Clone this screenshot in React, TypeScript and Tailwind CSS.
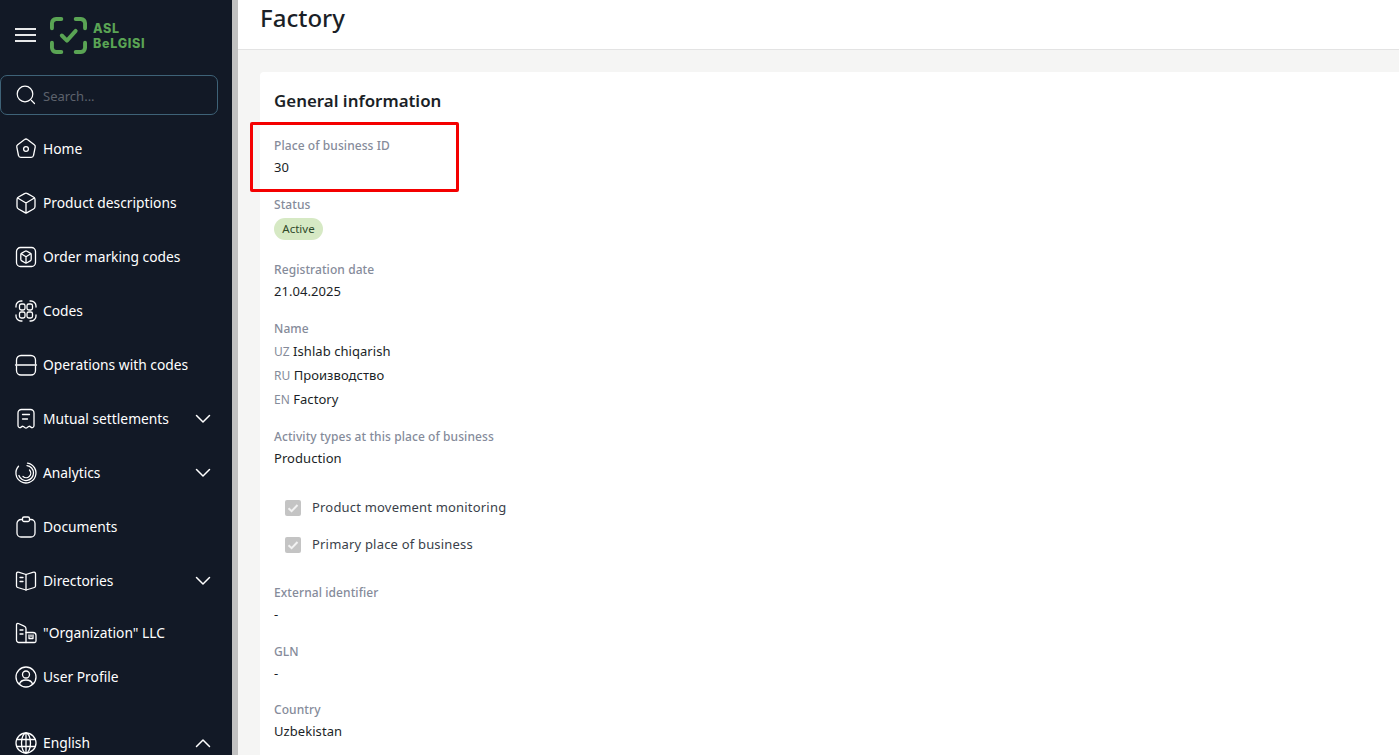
const sans = "font-['Noto_Sans','Open_Sans',sans-serif]";

const icons: Record<string, React.ReactNode> = {
  home: (
    <>
      <path d="M10.600 2.600a2.200 2.200 0 0 1 2.800 0l6.900 5.200c.8.600 1.100 1.500.9 2.400l-1.700 8.300c-.2 1.100-1.200 1.900-2.300 1.900H6.800c-1.100 0-2.100-.8-2.300-1.900l-1.700-8.300c-.2-.9.100-1.800.9-2.400z" />
      <circle cx="12" cy="12" r="2.400" />
    </>
  ),
  box: (
    <>
      <path d="M10.500 2.600a3 3 0 0 1 3 0l6 3.400a3 3 0 0 1 1.500 2.600v6.800a3 3 0 0 1-1.500 2.600l-6 3.400a3 3 0 0 1-3 0l-6-3.400A3 3 0 0 1 3 15.400V8.600A3 3 0 0 1 4.500 6z" />
      <path d="M3.600 7 12 12l8.400-5M12 12v10" />
    </>
  ),
  order: (
    <>
      <path d="M2.500 8V6.500a4 4 0 0 1 4-4h11a4 4 0 0 1 4 4V8M21.500 16v1.500a4 4 0 0 1-4 4h-11a4 4 0 0 1-4-4V16M2.500 8v8M21.500 8v8" />
      <path d="M11 6.300a2 2 0 0 1 2 0l3.200 1.800a2 2 0 0 1 1 1.700v4.400a2 2 0 0 1-1 1.700L13 17.700a2 2 0 0 1-2 0l-3.200-1.800a2 2 0 0 1-1-1.700V9.800a2 2 0 0 1 1-1.700z" />
      <path d="M7.200 8.800 12 11.800l4.800-3M12 11.800v6" />
    </>
  ),
  codes: (
    <>
      <path d="M2 8V7a5 5 0 0 1 5-5h1M16 2h1a5 5 0 0 1 5 5v1M22 16v1a5 5 0 0 1-5 5h-1M8 22H7a5 5 0 0 1-5-5v-1" />
      <rect x="5.500" y="5" width="5.500" height="6" rx="1.800" />
      <rect x="13" y="5" width="5.500" height="6" rx="1.800" />
      <rect x="5.500" y="13" width="5.500" height="6" rx="1.800" />
      <rect x="13" y="13" width="5.500" height="6" rx="1.800" />
    </>
  ),
  operations: (
    <>
      <path d="M2.500 11V7A4.500 4.500 0 0 1 7 2.500h10A4.500 4.500 0 0 1 21.500 7v4" />
      <path d="M1.500 12h21" />
      <path d="M2.500 13v4.500A4.500 4.500 0 0 0 7 22h10a4.500 4.500 0 0 0 4.500-4.500V13" />
    </>
  ),
  receipt: (
    <>
      <path d="M4 18.500V6a3.500 3.500 0 0 1 3.500-3.500h9A3.500 3.500 0 0 1 20 6v12.500c0 2-2 2.800-3.300 1.500-1-1-2.200-1-3 .2-.8 1.100-2.600 1.100-3.400 0-.8-1.200-2-1.200-3-.2C6 21.300 4 20.500 4 18.500z" />
      <path d="M8.500 7.500h7M8.500 12h5" />
    </>
  ),
  analytics: (
    <>
      <path d="M13.500 2.100A10 10 0 1 1 4.500 5.300" />
      <path d="M13 4.600A7.500 7.500 0 1 1 4.900 14.500" />
      <path d="M15.500 9A4.600 4.600 0 0 1 9 15.500" />
    </>
  ),
  documents: (
    <>
      <path d="M8.500 4.500H7A4 4 0 0 0 3 8.500V18a4 4 0 0 0 4 4h10a4 4 0 0 0 4-4V8.500a4 4 0 0 0-4-4h-1.500" />
      <rect x="8.500" y="2" width="7" height="4.500" rx="1.500" />
    </>
  ),
  book: (
    <>
      <path d="M12 5.500 4.500 3.200A1.500 1.500 0 0 0 2.500 4.600v12.500c0 .7.400 1.200 1.100 1.400L12 21l8.400-2.500c.7-.2 1.100-.7 1.100-1.400V4.600a1.500 1.500 0 0 0-2-1.400z" />
      <path d="M12 5.500V21M6 8.500h3M6 12.500h3" />
    </>
  ),
  org: (
    <>
      <path d="M12 21.500H5a2.500 2.500 0 0 1-2.500-2.500V3.800c0-1 1-1.700 1.900-1.300l5.800 2.600c1 .4 1.800 1.400 1.800 2.600z" />
      <path d="M6 9h3M6 13h3" />
      <path d="M12 21.500h8.500a1.500 1.500 0 0 0 1.500-1.500v-5.500a3 3 0 0 0-3-3h-7" />
      <path d="M15 14v3.500h4V14M17 14v1.500" />
    </>
  ),
  user: (
    <>
      <circle cx="12" cy="12" r="10" />
      <circle cx="12" cy="9.500" r="3.500" />
      <path d="M5.500 19c.8-2.800 3-4 6.500-4s5.700 1.200 6.500 4" />
    </>
  ),
  globe: (
    <>
      <circle cx="12" cy="12" r="10" />
      <ellipse cx="12" cy="12" rx="4.500" ry="10" />
      <path d="M2.800 8.500h18.400M2.800 15.500h18.400" />
      <path d="M12 2v20" />
    </>
  ),
};

function NavIcon({ name }: { name: string }) {
  return (
    <svg viewBox="0 0 24 24" fill="none" stroke="currentColor" strokeWidth="1.300" strokeLinecap="round" strokeLinejoin="round" className="w-[24px] h-[24px] shrink-0">
      {icons[name]}
    </svg>
  );
}

function Chevron({ up }: { up?: boolean }) {
  return (
    <svg viewBox="0 0 16 10" fill="none" stroke="currentColor" strokeWidth="1.500" strokeLinecap="round" strokeLinejoin="round" className="w-[16px] h-[10px] ml-auto mr-[21px]">
      <path d={up ? "M1.500 8.500 8 2l6.500 6.500" : "M1.500 1.500 8 8l6.500-6.500"} />
    </svg>
  );
}

function NavItem({ icon, label, chevron, up, className = "h-[54px]" }: { icon: string; label: string; chevron?: boolean; up?: boolean; className?: string }) {
  return (
    <div className={`flex items-center pl-[14px] text-white text-[13.800px] ${className}`}>
      <NavIcon name={icon} />
      <span className="ml-[5px]">{label}</span>
      {chevron && <Chevron up={up} />}
    </div>
  );
}

function Field({ label, children, className = "" }: { label: string; children: React.ReactNode; className?: string }) {
  return (
    <div className={className}>
      <div className="text-[12px] font-medium leading-[18px] tracking-[0.08px] text-[#858b9a]">{label}</div>
      {children}
    </div>
  );
}

function Value({ children }: { children: React.ReactNode }) {
  return <div className="text-[13px] leading-[24px] tracking-[0.06px] text-[#1b1f27]">{children}</div>;
}

function Lang({ code, children }: { code: string; children: React.ReactNode }) {
  return (
    <div className="h-[24px]">
      <span className="text-[12px] leading-none text-[#858b9a]">{code}</span> <span className="tracking-[0.06px]">{children}</span>
    </div>
  );
}

function Check({ label, className = "" }: { label: string; className?: string }) {
  return (
    <div className={`flex items-center h-[20px] pl-[11px] ${className}`}>
      <div className="w-[16px] h-[16px] rounded-[2px] bg-[#c4c4c4] flex items-center justify-center">
        <svg viewBox="0 0 16 16" fill="none" stroke="#f2f2f2" strokeWidth="2" className="w-[16px] h-[16px]">
          <path d="M3.500 8.200 6.600 11.200 12.500 5" />
        </svg>
      </div>
      <span className="ml-[11px] text-[13px] tracking-[0.19px] text-[#3a3f4a]">{label}</span>
    </div>
  );
}

export default function App() {
  return (
    <div className={`relative flex h-[755px] w-[1399px] overflow-hidden bg-[#f5f5f4] ${sans}`}>
      <aside className="w-[232px] shrink-0 bg-[#121926]">
        <div className="flex items-center h-[70px] pl-[15px]">
          <div className="w-[21px] flex flex-col gap-[4px]">
            <div className="h-[2px] bg-white/90" />
            <div className="h-[2px] bg-white/90" />
            <div className="h-[2px] bg-white/90" />
          </div>
          <svg viewBox="0 0 36 36" fill="none" stroke="#5aa454" strokeWidth="3.800" strokeLinecap="round" strokeLinejoin="round" className="w-[37px] h-[37px] ml-[14px]">
            <path d="M11 1.900H6A4.500 4.500 0 0 0 1.900 6v5M25 1.900h5A4.500 4.500 0 0 1 34.100 6v5M34.100 25v5a4.500 4.500 0 0 1-4.100 4.100h-5M11 34.100H6A4.500 4.500 0 0 1 1.900 30v-5" />
            <path d="M11.500 18 16.500 23 25 13.500" />
          </svg>
          <div className="ml-[6px] font-['Inter',sans-serif] font-extrabold text-[12.500px] leading-[15px] tracking-[0.7px] text-[#5aa454] mt-[2px]">
            <div>ASL</div>
            <div>BeLGISI</div>
          </div>
        </div>
        <div className="mt-[5px] w-[218px] h-[40px] rounded-[7px] border border-[#3e6277] flex items-center pl-[15px]">
          <svg viewBox="0 0 20 20" fill="none" stroke="white" strokeWidth="1.200" strokeLinecap="round" className="w-[20px] h-[20px]">
            <circle cx="9" cy="9" r="7.800" />
            <path d="M15.500 15.500 18.500 18.500" />
          </svg>
          <span className="ml-[7px] pt-[3px] text-[13px] text-[#5d626c]">Search...</span>
        </div>
        <div className="mt-[7px]">
          <NavItem icon="home" label="Home" />
          <NavItem icon="box" label="Product descriptions" />
          <NavItem icon="order" label="Order marking codes" />
          <NavItem icon="codes" label="Codes" />
          <NavItem icon="operations" label="Operations with codes" />
          <NavItem icon="receipt" label="Mutual settlements" chevron />
          <NavItem icon="analytics" label="Analytics" chevron />
          <NavItem icon="documents" label="Documents" />
          <NavItem icon="book" label="Directories" chevron />
          <NavItem icon="org" label={'"Organization" LLC'} className="h-[50px]" />
          <NavItem icon="user" label="User Profile" className="h-[38px]" />
          <NavItem icon="globe" label="English" chevron up className="h-[38px] mt-[28px]" />
        </div>
      </aside>
      <div className="w-[6px] shrink-0 bg-[#c1c1c1]" />
      <main className="flex-1 min-w-0">
        <header className="h-[50px] bg-white border-b border-[#e3e3e3] pl-[22px]">
          <h1 className="text-[24px] font-medium leading-[35px] text-[#1b1f27]">Factory</h1>
        </header>
        <section className="mt-[22px] ml-[22px] h-[700px] rounded-tl-[4px] bg-white pl-[14px] pt-[16px]">
          <h2 className="text-[16.900px] font-semibold leading-[26px] text-[#1b1f27]">General information</h2>
          <Field label="Place of business ID" className="mt-[23px]">
            <Value>30</Value>
          </Field>
          <Field label="Status" className="mt-[17px]">
            <div className="mt-[4px] w-[49px] h-[22px] rounded-full bg-[#d6e9c4] flex items-center justify-center text-[11.500px] text-[#2f4a2a]">Active</div>
          </Field>
          <Field label="Registration date" className="mt-[21px]">
            <Value>21.04.2025</Value>
          </Field>
          <Field label="Name" className="mt-[17px]">
            <div className="mt-[1px] text-[13px] leading-[24px] text-[#1b1f27]">
              <Lang code="UZ">Ishlab chiqarish</Lang>
              <Lang code="RU">Производство</Lang>
              <Lang code="EN">Factory</Lang>
            </div>
          </Field>
          <Field label="Activity types at this place of business" className="mt-[17px]">
            <Value>Production</Value>
          </Field>
          <Check label="Product movement monitoring" className="mt-[28px]" />
          <Check label="Primary place of business" className="mt-[17px]" />
          <Field label="External identifier" className="mt-[29px]">
            <Value>-</Value>
          </Field>
          <Field label="GLN" className="mt-[17px]">
            <Value>-</Value>
          </Field>
          <Field label="Country" className="mt-[16px]">
            <Value>Uzbekistan</Value>
          </Field>
        </section>
      </main>
      <div className="absolute left-[250px] top-[122px] w-[209px] h-[70px] border-[3px] border-[#f40000] rounded-[2px]" />
    </div>
  );
}
